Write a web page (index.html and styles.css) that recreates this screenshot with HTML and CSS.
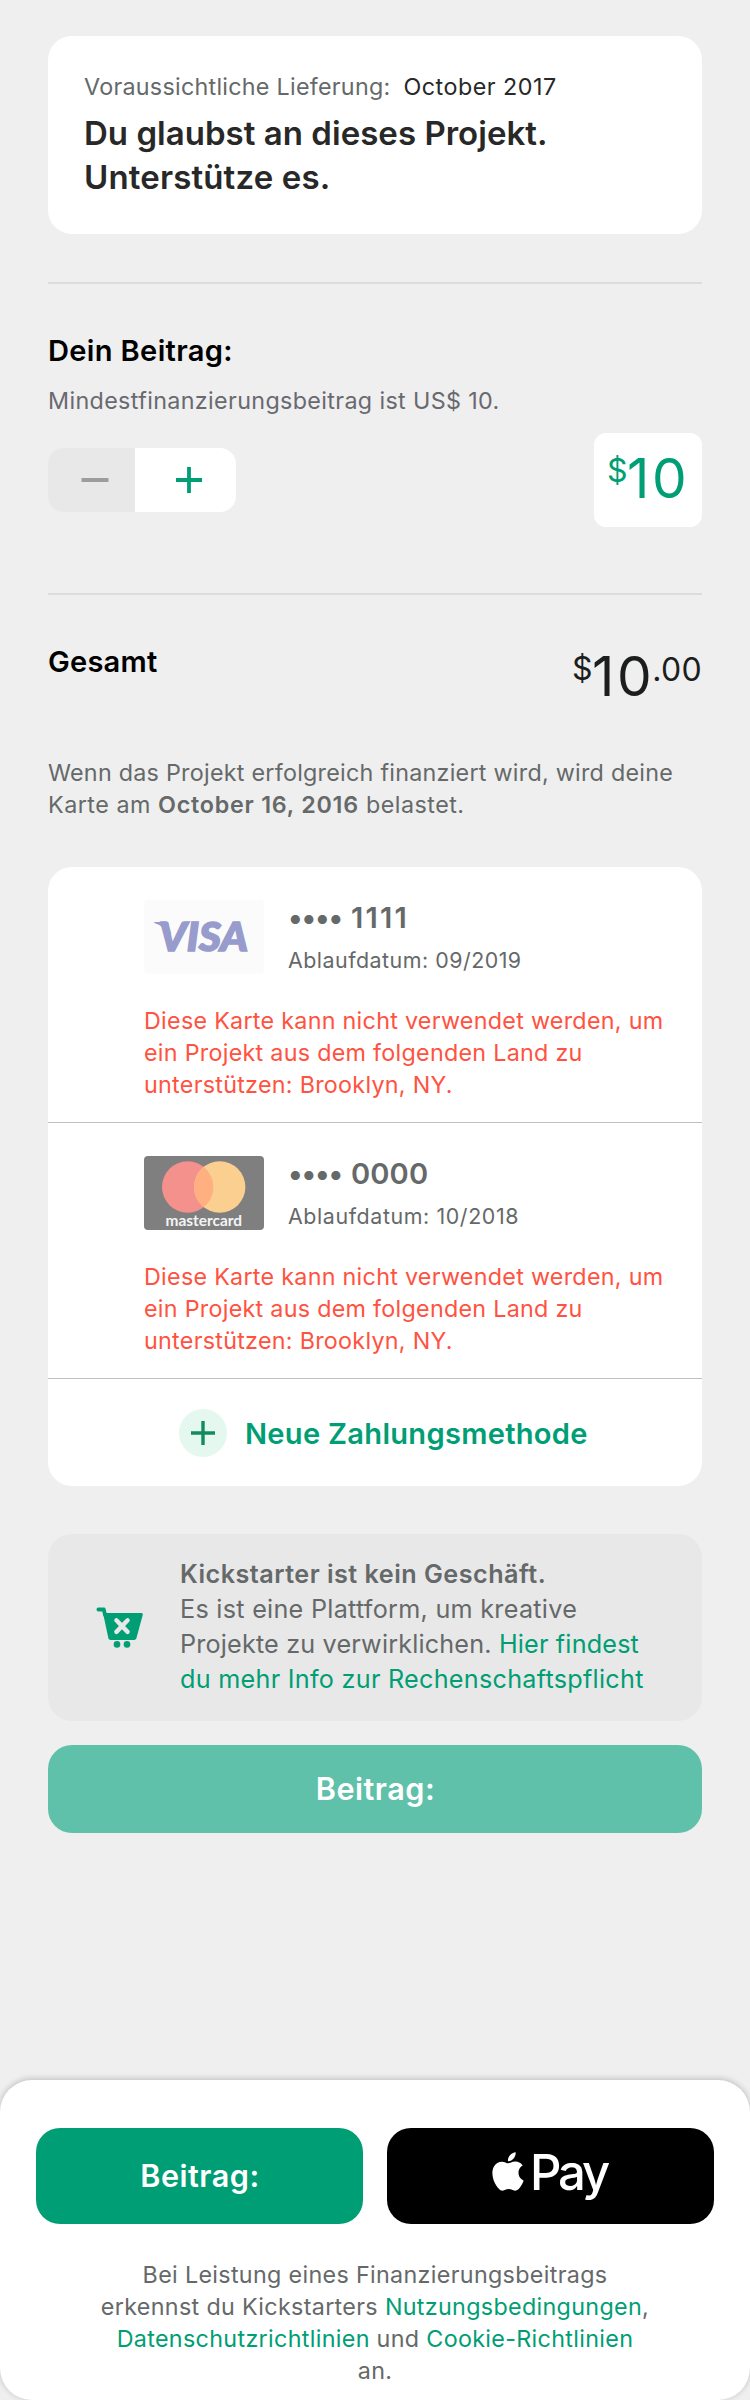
FILE: index.html
```html
<!DOCTYPE html>
<html lang="de">
<head>
<meta charset="utf-8">
<title>Beitrag</title>
<link rel="stylesheet" href="styles.css">
</head>
<body>
<div class="screen">
  <main class="content">
    <section class="summary">
      <div class="delivery"><span>Voraussichtliche Lieferung:</span><span class="delivery-date">October 2017</span></div>
      <h1 class="headline">Du glaubst an dieses Projekt.<br><span class="headline-end">Unterstütze es.</span></h1>
    </section>
    <hr class="divider">
    <section class="pledge">
      <h2 class="title">Dein Beitrag:</h2>
      <p class="minimum">Mindestfinanzierungsbeitrag ist US$ 10.</p>
      <div class="pledge-row">
        <div class="stepper">
          <button class="step step-minus" aria-label="Weniger"><svg width="28" height="28" viewBox="0 0 28 28"><path d="M.5 14h27" stroke="#9b9e9e" stroke-width="3.8"/></svg></button>
          <button class="step step-plus" aria-label="Mehr"><svg width="28" height="28" viewBox="0 0 28 28"><path d="M1 14h26M14 1v26" stroke="#009e74" stroke-width="3.8"/></svg></button>
        </div>
        <div class="amount-box"><span class="currency">$</span><span class="whole">10</span></div>
      </div>
    </section>
    <hr class="divider divider-total">
    <section class="total">
      <h2 class="title">Gesamt</h2>
      <div class="total-amount"><span class="currency">$</span><span class="whole">10</span><span class="cents">.00</span></div>
    </section>
    <p class="charge-note"><span class="charge-line">Wenn das Projekt erfolgreich finanziert wird, wird deine</span><br>Karte am <strong>October 16, 2016</strong> belastet.</p>
    <section class="methods">
      <article class="method">
        <div class="method-head">
          <svg class="logo" width="120" height="74" viewBox="0 0 120 74">
            <rect width="120" height="74" rx="4" fill="#fbfbfb"/>
            <path d="M10.3 22h13l4 12-4 2q-2-10-13-13z" fill="#979ccc"/>
            <text class="visa" x="15" y="51" textLength="89" lengthAdjust="spacingAndGlyphs">VISA</text>
          </svg>
          <div class="method-text">
            <div class="number"><span class="dots">••••</span><span class="digits digits-ones">1111</span></div>
            <div class="expiry">Ablaufdatum: 09/2019</div>
          </div>
        </div>
        <p class="error">Diese Karte kann nicht verwendet werden, um<br>ein Projekt aus dem folgenden Land zu<br>unterstützen: Brooklyn, NY.</p>
      </article>
      <article class="method">
        <div class="method-head">
          <svg class="logo" width="120" height="74" viewBox="0 0 120 74">
            <rect width="120" height="74" rx="4" fill="#7f7f7f"/>
            <circle cx="43.7" cy="31" r="25.7" fill="#f5918d"/>
            <circle cx="75.7" cy="31" r="25.7" fill="#fbcf8f"/>
            <path d="M59.7 10.9a25.7 25.7 0 0 1 0 40.2a25.7 25.7 0 0 1 0-40.2z" fill="#ffaf80"/>
            <text class="mastercard" x="21.5" y="69.6" textLength="76.5" lengthAdjust="spacingAndGlyphs">mastercard</text>
          </svg>
          <div class="method-text">
            <div class="number"><span class="dots">••••</span><span class="digits">0000</span></div>
            <div class="expiry expiry-wide">Ablaufdatum: 10/2018</div>
          </div>
        </div>
        <p class="error">Diese Karte kann nicht verwendet werden, um<br>ein Projekt aus dem folgenden Land zu<br>unterstützen: Brooklyn, NY.</p>
      </article>
      <button class="new-method">
        <svg width="48" height="48" viewBox="0 0 48 48"><circle cx="24" cy="24" r="24" fill="#e5f8f0"/><path d="M12 24h24M24 12v24" stroke="#128a62" stroke-width="3.4"/></svg>
        <span>Neue Zahlungsmethode</span>
      </button>
    </section>
    <section class="notice">
      <svg class="cart" width="48" height="44" viewBox="0 0 48 44">
        <path d="M2.4 3.5h5.4l1.2 5.2" fill="none" stroke="#009e74" stroke-width="3.8" stroke-linecap="round" stroke-linejoin="round"/>
        <path d="M7 7h38.4q1.8 0 1.4 1.8l-6.4 23.4q-.5 1.8-2.3 1.8H14.6q-1.8 0-2.2-1.8z" fill="#009e74"/>
        <path d="M20.4 14.3l11.2 11.6M31.6 14.3L20.4 25.9" stroke="#e8e8e8" stroke-width="4.4" stroke-linecap="round"/>
        <circle cx="21" cy="38.4" r="3.3" fill="#009e74"/><circle cx="31" cy="38.4" r="3.3" fill="#009e74"/>
      </svg>
      <p class="notice-text"><strong>Kickstarter ist kein Geschäft.</strong><br>Es ist eine Plattform, um kreative<br><span class="notice-tight">Projekte zu verwirklichen. <a>Hier findest</a></span><br><a>du mehr Info zur Rechenschaftspflicht</a></p>
    </section>
    <button class="button button-disabled">Beitrag:</button>
  </main>
  <footer class="panel">
    <div class="actions">
      <button class="button button-primary">Beitrag:</button>
      <button class="button button-apple">
        <svg class="apple" width="32" height="39" viewBox="2 0 20 24"><path fill="#fff" d="M12.152 6.896c-.948 0-2.415-1.078-3.96-1.04-2.04.027-3.91 1.183-4.961 3.014-2.117 3.675-.546 9.103 1.519 12.09 1.013 1.454 2.208 3.09 3.792 3.039 1.52-.065 2.09-.987 3.935-.987 1.831 0 2.35.987 3.96.948 1.637-.026 2.676-1.48 3.676-2.948 1.156-1.688 1.636-3.325 1.662-3.415-.039-.013-3.182-1.221-3.22-4.857-.026-3.04 2.48-4.494 2.597-4.559-1.429-2.09-3.623-2.324-4.39-2.376-2-.156-3.675 1.09-4.61 1.09zM15.53 3.83c.843-1.012 1.4-2.427 1.245-3.83-1.207.052-2.662.805-3.532 1.818-.78.896-1.454 2.338-1.273 3.714 1.338.104 2.715-.688 3.559-1.701"/></svg>
        <span class="pay">Pay</span>
      </button>
    </div>
    <p class="legal">Bei Leistung eines Finanzierungsbeitrags<br>erkennst du Kickstarters <a>Nutzungsbedingungen</a>,<br><a>Datenschutzrichtlinien</a> und <a>Cookie-Richtlinien</a><br>an.</p>
  </footer>
</div>
</body>
</html>
```

FILE: styles.css
```css
* { box-sizing: border-box; margin: 0; padding: 0; }
body { font-family: Inter, "Liberation Sans", sans-serif; background: #efefef; }
svg { display: block; flex: none; }
button { border: 0; background: none; font-family: inherit; }
a { color: #009e74; }
.screen { width: 750px; height: 2400px; display: flex; flex-direction: column; overflow: hidden; white-space: nowrap; }
.content { padding: 36px 48px 0; }

.summary { height: 198px; padding: 35px 36px 0; background: #fff; border-radius: 24px; }
.delivery { display: flex; gap: 13px; font-size: 23.3px; line-height: 32px; letter-spacing: .27px; color: #656969; }
.delivery-date { color: #282828; letter-spacing: .5px; }
.headline { margin-top: 8px; font-size: 33px; font-weight: 600; line-height: 44px; letter-spacing: .03px; color: #282828; }
.headline-end { letter-spacing: .15px; }

.divider { height: 2px; border: 0; margin-top: 48px; background: #dcdcdc; }
.title { font-size: 29.1px; font-weight: 600; line-height: 36px; letter-spacing: .33px; color: #000; }
.pledge { padding-top: 49px; }
.minimum { margin-top: 16px; font-size: 23.3px; line-height: 32px; letter-spacing: .36px; color: #696970; }
.pledge-row { display: flex; justify-content: space-between; align-items: center; margin-top: 16px; height: 94px; }
.stepper { display: flex; width: 188px; height: 64px; border-radius: 16px; overflow: hidden; }
.step { display: flex; align-items: center; height: 64px; }
.step-minus { width: 87px; padding-left: 33px; background: #e8e8e8; }
.step-plus { width: 101px; padding-left: 40px; background: #fff; }
.currency, .cents { font-size: 32px; line-height: 36px; }
.whole { font-size: 55px; line-height: 60px; letter-spacing: 2.6px; }
.amount-box { display: flex; align-items: flex-start; width: 108px; height: 94px; padding: 15px 0 0 13px; border-radius: 12px; background: #fff; color: #009e74; }
.amount-box .currency { width: 20px; margin-top: 5px; }

.divider-total { margin-top: 66px; }
.total { display: flex; justify-content: space-between; height: 56px; margin-top: 48px; }
.total .title { padding-top: 1px; letter-spacing: .2px; }
.total-amount { display: flex; align-items: flex-start; color: #1c1e1e; padding-top: 3px; }
.total-amount .currency { width: 20px; margin-top: 5px; }
.total-amount .cents { margin: 6px 0 0 -2px; letter-spacing: .3px; }

.charge-note { margin-top: 57.5px; font-size: 23.3px; line-height: 32px; letter-spacing: .5px; color: #656969; }
.charge-line { letter-spacing: .26px; }
.charge-note strong { font-weight: 600; letter-spacing: .77px; }

.methods { margin-top: 46.5px; height: 619px; border-radius: 24px; background: #fff; }
.method { height: 256px; padding: 33px 0 0 96px; border-bottom: 1px solid #bfc1c1; }
.method-head { display: flex; height: 74px; }
.method-text { padding-left: 24px; color: #656969; }
.number { display: flex; gap: 9px; font-size: 29.1px; font-weight: 600; line-height: 36px; }
.dots { letter-spacing: -1.15px; }
.digits { letter-spacing: .1px; }
.digits-ones { letter-spacing: 2.2px; }
.expiry { margin-top: 10px; font-size: 21.4px; line-height: 28px; letter-spacing: .5px; }
.expiry-wide { letter-spacing: .6px; }
.error { margin-top: 30.5px; font-size: 23.3px; line-height: 32px; letter-spacing: .28px; color: #ff5240; }
.visa { font: italic 900 39.5px Lato, sans-serif; fill: #979ccc; stroke: #979ccc; stroke-width: 1.6px; }
.mastercard { font: 700 16px Lato, sans-serif; fill: #f4f4f4; }
.new-method { display: flex; align-items: center; gap: 18px; width: 100%; height: 107px; padding-left: 131px; font-size: 29.1px; font-weight: 600; line-height: 36px; letter-spacing: .28px; color: #009e74; }
.new-method span { padding-top: 3px; }

.notice { display: flex; align-items: flex-start; height: 187px; margin-top: 48px; padding: 23px 0 0 48px; border-radius: 24px; background: #e8e8e8; }
.cart { margin-top: 49px; }
.notice-text { padding-left: 36px; font-size: 25.2px; line-height: 35px; letter-spacing: .27px; color: #656969; }
.notice-text strong { font-weight: 600; letter-spacing: .48px; }
.notice-tight { letter-spacing: .17px; }

.button { display: flex; align-items: center; justify-content: center; padding: 0 0 2px 1px; border-radius: 24px; font-size: 30.6px; font-weight: 600; letter-spacing: .5px; color: #fff; }
.button-disabled { width: 100%; height: 88px; margin-top: 24px; background: #5fc1a9; }

.panel { margin-top: auto; height: 320px; padding: 48px 36px 0; border-radius: 32px; background: #fff; box-shadow: 0 -1px 6px rgba(0, 0, 0, .22); }
.actions { display: grid; grid-template-columns: 1fr 1fr; gap: 24px; height: 96px; }
.button-primary { background: #009e74; }
.button-apple { justify-content: flex-start; padding: 0 0 0 105px; background: #000; }
.apple { margin-top: -10px; }
.pay { margin: -7px 0 0 6px; font-size: 49px; font-weight: 500; letter-spacing: -3.2px; }
.legal { margin-top: 35px; text-align: center; font-size: 23.3px; line-height: 32px; letter-spacing: .33px; color: #656969; }
```
